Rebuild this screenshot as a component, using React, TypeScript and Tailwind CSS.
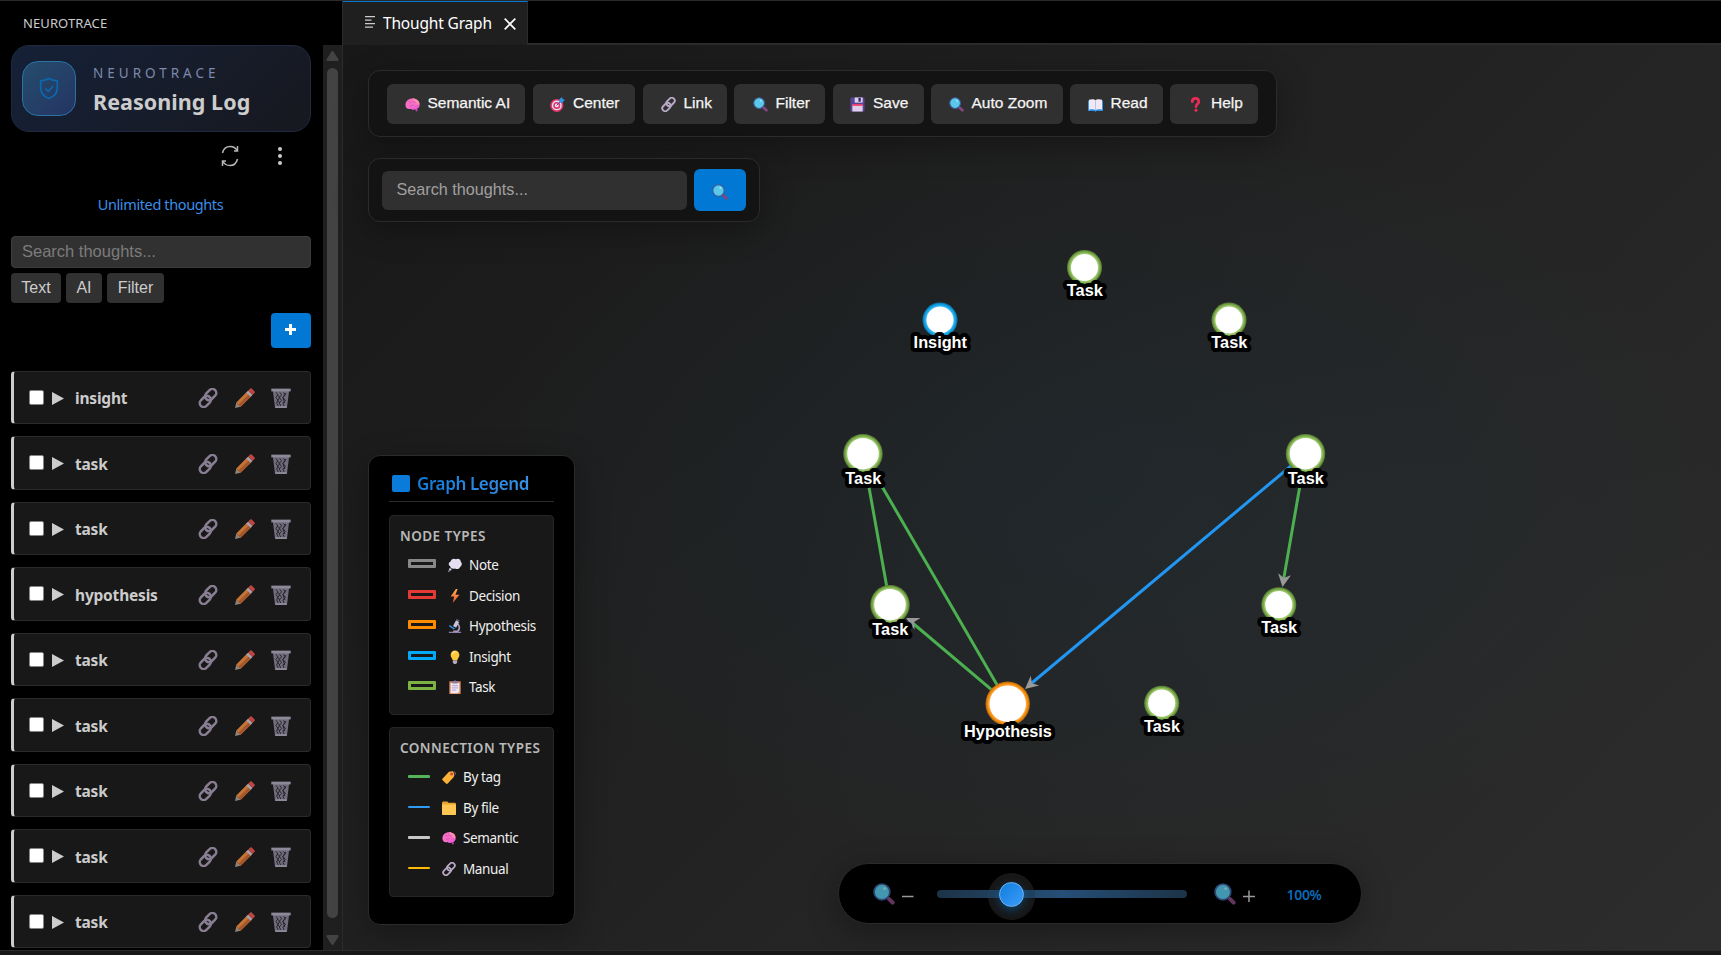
import React from "react";

type IconProps = { className?: string };

const Svg = ({ className = "", children }: IconProps & { children: React.ReactNode }) => (
  <svg viewBox="0 0 32 32" className={`block shrink-0 ${className}`} fill="none">
    {children}
  </svg>
);

const Brain = ({ className }: IconProps) => (
  <Svg className={className}>
    <path d="M20 24l4 7 3-1-1-7z" fill="#c43fb4" />
    <path d="M1 17C1 8 8 3 16 3c9 0 15 5 15 13 0 6-4 9-9 9-3 3-7 2-9 0C6 27 1 24 1 17z" fill="#f770c4" />
    <path d="M12 25c4 2 7 2 10 0 5 0 9-3 9-8-5 4-12 5-19 3z" fill="#f35fd8" />
    <path d="M16 3c9 0 15 5 15 13-4-1-7-3-8-6-3 0-6-3-7-7z" fill="#fb8fb0" />
    <path d="M7 10c3-1 5 1 5 4M14 7c1 4 5 4 8 4M9 19c4 1 6-2 10-2M21 18c2 3 5 2 7 0" stroke="#d14bb5" strokeWidth="1.500" />
  </Svg>
);

const Target = ({ className }: IconProps) => (
  <Svg className={className}>
    <circle cx="14.500" cy="18" r="14" fill="#e0356b" />
    <circle cx="14.500" cy="18" r="10.500" fill="#e9dff0" />
    <circle cx="14.500" cy="18" r="7.500" fill="#e0356b" />
    <circle cx="14.500" cy="18" r="4" fill="#f3e4f2" />
    <path d="M14 18l9-9" stroke="#5b3b8c" strokeWidth="2" />
    <path d="M20 5l6-5 1 5 5 1-6 6-6 0z" fill="#2f97e8" />
  </Svg>
);

const Chain = ({ className }: IconProps) => (
  <Svg className={className}>
    <g stroke="#b9a9c6" strokeWidth="4">
      <rect x="10.300" y="4.300" width="20" height="12.500" rx="6.250" transform="rotate(-45 20.300 10.500)" />
      <rect x="1.700" y="15.200" width="20" height="12.500" rx="6.250" transform="rotate(-45 11.700 21.500)" />
    </g>
  </Svg>
);

const Magnifier = ({ className }: IconProps) => (
  <Svg className={className}>
    <path d="M20 20l3 3" stroke="#5a4a88" strokeWidth="4" />
    <path d="M23.500 23.500l5 5" stroke="#84467f" strokeWidth="6" strokeLinecap="round" />
    <circle cx="13" cy="13" r="11.500" fill="#5ac8ea" stroke="#3d5a96" strokeWidth="2.400" />
    <circle cx="17" cy="8" r="2" fill="#a5e8fa" />
  </Svg>
);

const Floppy = ({ className }: IconProps) => (
  <Svg className={className}>
    <path d="M1 3a2 2 0 012-2h26l2 2v26a2 2 0 01-2 2H3a2 2 0 01-2-2z" fill="#5a4498" />
    <path d="M10 1h17v11H10z" fill="#dcd0ea" />
    <path d="M18 2h5v8h-5z" fill="#33265e" />
    <path d="M5 17h22v14H5z" fill="#dfcdea" />
    <path d="M5 15h22v4H5z" fill="#f0446f" />
  </Svg>
);

const Book = ({ className }: IconProps) => (
  <Svg className={className}>
    <path d="M0 8h32v22H18l-2 2-2-2H0z" fill="#2c8fe0" />
    <path d="M2 6c5-2 11-2 14 1 3-3 9-3 14-1v21c-5-1-11-1-14 1-3-2-9-2-14-1z" fill="#efe8f6" />
    <path d="M16 7v21" stroke="#b6a9c9" strokeWidth="1.500" />
  </Svg>
);

const Question = ({ className }: IconProps) => (
  <Svg className={className}>
    <path d="M9 10c0-5 3-7 7-7s7 3 7 7c0 5-6 5-6 11" stroke="#ee2b55" strokeWidth="5.500" strokeLinecap="round" />
    <circle cx="17" cy="28.500" r="3.200" fill="#ee2b55" />
  </Svg>
);

const Pencil = ({ className }: IconProps) => (
  <Svg className={className}>
    <path d="M0 32l2-9 7 7z" fill="#8f8378" />
    <path d="M2 23L19 6l7 7L9 30z" fill="#c47536" />
    <path d="M5.500 26.500L22.500 9.500l3.500 3.500L9 30z" fill="#a4562c" />
    <path d="M18 7l3-3 7 7-3 3z" fill="#a8a3b3" />
    <path d="M21 4l3-3c1-1 2-1 3 0l4 4c1 1 1 2 0 3l-3 3z" fill="#bf4541" />
  </Svg>
);

const Trash = ({ className }: IconProps) => (
  <Svg className={className}>
    <path d="M3 4h26l-3.500 28h-19z" fill="#716d7d" />
    <path d="M8 7l3 4-3 4 3 5-2 4 3 5M14 7l3 4-4 4 4 5-4 4 3 5M20 7l3 4-4 4 4 5-4 4 2 5M24 8l-5 7 3 9M10 11l4 4-3 5 3 4" stroke="#1d1c20" strokeWidth="1.400" />
    <path d="M.500 1h31v4.500H.500z" fill="#8d8998" />
    <path d="M7 29h18v3H7z" fill="#8d8998" />
  </Svg>
);

const Thought = ({ className }: IconProps) => (
  <Svg className={className}>
    <path d="M6 8c1-6 8-8 12-5 5-3 11 0 11 5 4 4 3 10-1 12-2 6-8 6-12 4-5 2-11 0-11-5-5-3-4-9 1-11z" fill="#e6dff2" />
    <circle cx="5" cy="26" r="2.800" fill="#d7cde8" />
    <circle cx="2" cy="30" r="1.500" fill="#d7cde8" />
  </Svg>
);

const Bolt = ({ className }: IconProps) => (
  <Svg className={className}>
    <path d="M18 0L6 17h8l-3 15 15-19h-9l5-13z" fill="url(#boltFill)" />
    <defs>
      <linearGradient id="boltFill" x1="0" y1="0" x2="0" y2="1">
        <stop stopColor="#ffb04a" />
        <stop offset="1" stopColor="#f0503c" />
      </linearGradient>
    </defs>
  </Svg>
);

const Microscope = ({ className }: IconProps) => (
  <Svg className={className}>
    <path d="M2 29h28v3H2z" fill="#8d7ea6" />
    <path d="M21 11c6 3 7 12 1 17H12" stroke="#a898bd" strokeWidth="4" />
    <path d="M15 18l7-13" stroke="#cdc2dc" strokeWidth="8" />
    <path d="M19 1l7 4" stroke="#5f5479" strokeWidth="3.500" />
    <path d="M3 15l12 8" stroke="#2d8fe0" strokeWidth="3.500" />
  </Svg>
);

const Bulb = ({ className }: IconProps) => (
  <Svg className={className}>
    <path d="M6 11a10 10 0 0120 0c0 6-4 8-5 13H11C10 19 6 17 6 11z" fill="#fcc73b" />
    <path d="M10 9c1-3 3-5 6-5" stroke="#ffe99a" strokeWidth="3" strokeLinecap="round" />
    <path d="M11 24h10v5l-3 3h-4l-3-3z" fill="#b5a8c4" />
  </Svg>
);

const Clipboard = ({ className }: IconProps) => (
  <Svg className={className}>
    <path d="M3 3h26v29H3z" fill="#d98657" />
    <path d="M6 7h20v20l-4 3H6z" fill="#efe6f4" />
    <path d="M10 2h4l2-2 2 2h4v6H10z" fill="#8b7ba3" />
    <path d="M9 13h14M9 18h14M9 23h9" stroke="#a99abf" strokeWidth="2" />
  </Svg>
);

const Tag = ({ className }: IconProps) => (
  <Svg className={className}>
    <path d="M1 20L16 4l9-1 3 4-1 9-14 15c-1 1-3 1-4 0l-8-8c-1-1-1-2 0-3z" fill="#fbb236" />
    <path d="M24 10c1-6 6-7 7-3 0 4-2 5-4 6" stroke="#8a6f80" strokeWidth="1.800" />
    <circle cx="22" cy="9" r="3.500" fill="#c94f45" />
  </Svg>
);

const Folder = ({ className }: IconProps) => (
  <Svg className={className}>
    <path d="M0 4l2-3h10l3 3h15l2 2v24l-2 2H2l-2-2z" fill="#e6a432" />
    <path d="M0 8h32v22l-2 2H2l-2-2z" fill="#fec653" />
  </Svg>
);

const tools: { label: string; Icon: React.FC<IconProps>; cls: string }[] = [
  { label: "Semantic AI", Icon: Brain, cls: "w-[138px] pl-[17.5px]" },
  { label: "Center", Icon: Target, cls: "ml-2 w-[102px] pl-[17px]" },
  { label: "Link", Icon: Chain, cls: "ml-2 w-[84px] pl-[17.5px]" },
  { label: "Filter", Icon: Magnifier, cls: "ml-[7px] w-[91px] pl-[18.5px]" },
  { label: "Save", Icon: Floppy, cls: "ml-2 w-[91px] pl-[17px]" },
  { label: "Auto Zoom", Icon: Magnifier, cls: "ml-[7px] w-[132px] pl-[17.5px]" },
  { label: "Read", Icon: Book, cls: "ml-[7px] w-[93px] pl-[17.5px]" },
  { label: "Help", Icon: Question, cls: "ml-[7px] w-[88px] pl-[18px]" },
];

const thoughts = ["insight", "task", "task", "hypothesis", "task", "task", "task", "task", "task"];

const nodeTypes = [
  { label: "Note", Icon: Thought, cls: "border-[#888888]" },
  { label: "Decision", Icon: Bolt, cls: "border-[#e53935]" },
  { label: "Hypothesis", Icon: Microscope, cls: "border-[#fb8c00]" },
  { label: "Insight", Icon: Bulb, cls: "border-[#03a9f4]" },
  { label: "Task", Icon: Clipboard, cls: "border-[#7cb342]" },
];

const connectionTypes = [
  { label: "By tag", Icon: Tag, cls: "h-[3px] bg-[#55b45a]" },
  { label: "By file", Icon: Folder, cls: "h-[2px] bg-[#2f9bf5]" },
  { label: "Semantic", Icon: Brain, cls: "h-[3px] bg-[#c8c8c8]" },
  { label: "Manual", Icon: Chain, cls: "h-[2px] bg-[#fdbb05]" },
];

const G = { ring: "#74a544", inner: "#98c368", outer: "#5b8038" };
const O = { ring: "#ee8606", inner: "#fb9f2e", outer: "#b96b12" };
const B = { ring: "#0a9de2", inner: "#2fb0ec", outer: "#0c76aa" };

const nodes = [
  { x: 1084.5, y: 267.5, r: 17.5, label: "Task", c: G },
  { x: 940, y: 320, r: 17.5, label: "Insight", c: B },
  { x: 1229, y: 320, r: 17.5, label: "Task", c: G },
  { x: 863, y: 453.7, r: 19.7, label: "Task", c: G },
  { x: 1305.5, y: 453.7, r: 19.7, label: "Task", c: G },
  { x: 890, y: 604.7, r: 19.7, label: "Task", c: G },
  { x: 1278.8, y: 604.7, r: 17.5, label: "Task", c: G },
  { x: 1007.7, y: 703.7, r: 22.2, label: "Hypothesis", c: O },
  { x: 1161.7, y: 703.2, r: 17.5, label: "Task", c: G },
];

const arrows = [
  { x: 906, y: 618, a: 207 },
  { x: 1025, y: 689, a: 140 },
  { x: 1282.5, y: 587, a: 99 },
];

const Graph = () => (
  <svg className="absolute inset-0 h-full w-full" viewBox="343 45 1378 905">
    <g strokeWidth="3">
      <path d="M863 453.700L890 604.700M1008 703.700L863 453.700M1008 703.700L912 622.500M1305.500 453.700L1283.500 580" stroke="#4caf50" />
      <path d="M1305.500 453.700L1030 684.500" stroke="#2196f3" />
    </g>
    {arrows.map((p, i) => (
      <path key={i} d="M0 0L-13 -6.500L-9 0L-13 6.500Z" fill="#999999" transform={`translate(${p.x} ${p.y}) rotate(${p.a})`} />
    ))}
    {nodes.map((n, i) => (
      <g key={i}>
        <circle cx={n.x} cy={n.y} r={n.r} fill={n.c.outer} />
        <circle cx={n.x} cy={n.y} r={n.r - 1} fill={n.c.ring} />
        <circle cx={n.x} cy={n.y} r={n.r - 2.4} fill={n.c.inner} />
        <circle cx={n.x} cy={n.y} r={n.r - 3.9} fill="#ffffff" />
        <text
          x={n.x + 0.3}
          y={n.y + n.r + 10.9}
          textAnchor="middle"
          className="fill-white stroke-black font-['Liberation_Sans',sans-serif] text-[16.3px] font-bold"
          strokeWidth="8"
          strokeLinejoin="round"
          paintOrder="stroke"
        >
          {n.label}
        </text>
      </g>
    ))}
  </svg>
);

const Sidebar = () => (
  <aside className="flex w-[343px] shrink-0 flex-col border-r border-[#2b2b2b] bg-black text-[#cccccc]">
    <div className="flex h-[44px] shrink-0 items-center pl-[23px] pt-px text-[13px] tracking-[0.1px]">
      <span>NEUROTRACE</span>
    </div>
    <div className="flex min-h-0 flex-1">
      <div className="w-[323px] overflow-hidden pl-[11px] pr-3">
        <div className="flex h-[87px] items-center rounded-[18px] border border-[#1f2a41] bg-linear-135 from-[#152138] to-[#17181f] pl-[10px]">
          <div className="flex h-[55px] w-[54px] items-center justify-center rounded-[16px] border border-[#2b73a5] bg-linear-135 from-[#254d6c] to-[#243463]">
            <svg width="20" height="23" viewBox="0 0 20 23" fill="none" stroke="#0b68ad" strokeWidth="1.700" strokeLinejoin="round" strokeLinecap="round">
              <path d="M10 1.500c2.500 1.500 5 2.200 8.300 2.300V11c0 5-3 8.500-8.300 10.500C4.700 19.500 1.700 16 1.700 11V3.800C5 3.700 7.500 3 10 1.500z" />
              <path d="M7 12l2.300 2.300L13.800 9.500" />
            </svg>
          </div>
          <div className="ml-[17px] flex flex-col pt-[4px]">
            <span className="text-[13.5px] leading-[20px] tracking-[4px] text-[#7d89ab]">NEUROTRACE</span>
            <span className="mt-[3px] text-[21.5px] font-bold leading-[32px] tracking-[0.05px]">Reasoning Log</span>
          </div>
        </div>
        <div className="mt-3 flex h-6 items-center justify-end pr-[28px]">
          <svg width="18" height="22" viewBox="0 0 18 22" fill="none" stroke="#b5b5b5" strokeWidth="1.500">
            <path d="M1.500 8C2.500 3.800 5.500 1.500 9 1.500c3 0 5.500 1.200 7 4M16.500 1v5h-3.500M16.500 14c-1 4.200-4 6.500-7.500 6.500-3 0-5.500-1.200-7-4M1.500 21v-5H5" />
          </svg>
          <svg className="ml-[38px]" width="6" height="20" viewBox="0 0 6 20" fill="#cccccc">
            <circle cx="3" cy="3" r="2" />
            <circle cx="3" cy="10" r="2" />
            <circle cx="3" cy="17" r="2" />
          </svg>
        </div>
        <div className="mt-[25px] flex h-6 items-center justify-center pr-px text-[14.5px] tracking-[-0.38px] text-[#3b8eea]">Unlimited thoughts</div>
        <div className="mt-[19px] flex h-8 items-center rounded-[4px] border border-[#3c3c3c] bg-[#313131] pl-[10px] pb-px font-['Liberation_Sans',sans-serif] text-[16.5px] text-[#7c7c7c]">
          Search thoughts...
        </div>
        <div className="mt-[5px] flex h-[30px] gap-[5px] font-['Liberation_Sans',sans-serif] text-[16px]">
          <div className="flex w-[50px] items-center justify-center rounded-[4px] bg-[#313131] pb-px">Text</div>
          <div className="flex w-[36px] items-center justify-center rounded-[4px] bg-[#313131] pb-px">AI</div>
          <div className="flex w-[57px] items-center justify-center rounded-[4px] bg-[#313131] pb-px">Filter</div>
        </div>
        <div className="mt-[10px] flex justify-end">
          <div className="flex h-[35px] w-10 items-center justify-center rounded-[4px] bg-[#0078d4] pb-[2px] pr-px">
            <svg width="11" height="11" viewBox="0 0 11 11" stroke="#ffffff" strokeWidth="3">
              <path d="M5.500 0v11M0 5.500h11" />
            </svg>
          </div>
        </div>
        <div className="mt-[22.8px] flex flex-col gap-3">
          {thoughts.map((t, i) => (
            <div key={i} className="flex h-[53.5px] shrink-0 items-center rounded-[4px] border border-l-[3px] border-[#2b2b2b] border-l-[#cccccc] bg-[#181818] pl-[15px] pr-[19px]">
              <span className="mb-px h-[15px] w-[15px] rounded-[2px] border border-[#858585] bg-white" />
              <svg className="ml-2 mt-px" width="12" height="13" viewBox="0 0 12 13" fill="#cccccc">
                <path d="M0 0l12 6.500L0 13z" />
              </svg>
              <span className="ml-[11px] flex-1 pt-[2.5px] text-[15.5px] font-bold tracking-[-0.2px]">{t}</span>
              <Chain className="mt-px size-5 opacity-70" />
              <Pencil className="ml-[17px] mt-px size-5" />
              <Trash className="ml-4 mt-px size-5" />
            </div>
          ))}
        </div>
      </div>
      <div className="flex w-[19px] flex-col items-center bg-[#1f1f1f]">
        <svg className="mt-[6px] shrink-0" width="13" height="11" viewBox="0 0 13 11" fill="#434343">
          <path d="M6.500 0q.800 0 1.400 1L12.500 8.500q.500 1.500-1 1.500H1.500Q0 10 .500 8.500L5.100 1Q5.700 0 6.500 0z" />
        </svg>
        <div className="mt-[6px] h-[850px] w-[11px] shrink-0 rounded-full bg-[#434343]" />
        <svg className="mt-[17px] shrink-0" width="13" height="11" viewBox="0 0 13 11" fill="#434343">
          <path d="M6.500 10q.800 0 1.400-1L12.500 1.500Q13 0 11.500 0H1.500Q0 0 .500 1.500L5.100 9q.600 1 1.400 1z" />
        </svg>
      </div>
    </div>
  </aside>
);

const Legend = () => (
  <div className="flex h-[470px] w-[207px] shrink-0 flex-col rounded-[12px] border border-[#2b2b2b] bg-black px-5 pt-[14px] shadow-[0_8px_32px_rgba(0,0,0,0.3)]">
    <div className="flex h-8 items-center border-b border-[#2b2b2b] pl-[3px] text-[17px] font-semibold">
      <span className="mb-[5px] h-[17px] w-[18px] rounded-[2px] bg-[#0a7bd8]" />
      <span className="mb-[3px] ml-[7px] whitespace-nowrap bg-linear-90 from-[#0f7bd9] to-[#3791e6] bg-clip-text tracking-[-0.38px] text-transparent">Graph Legend</span>
    </div>
    <div className="mt-[13px] h-[200px] rounded-[4px] border border-[#262626] bg-[#181818] pl-[10px] pt-[10px]">
      <div className="h-6 whitespace-nowrap text-[13.5px] font-semibold leading-[21px] tracking-[0.45px] text-[#b8b8b8]">NODE TYPES</div>
      {nodeTypes.map(({ label, Icon, cls }) => (
        <div key={label} className="flex h-[30.5px] items-center pl-2">
          <span className={`mb-[3px] h-[9px] w-7 rounded-[1px] border-[3px] ${cls}`} />
          <Icon className="ml-3 size-[14px]" />
          <span className="ml-[7px] text-[13.5px] tracking-[-0.37px] text-[#f0f0f0]">{label}</span>
        </div>
      ))}
    </div>
    <div className="mt-3 h-[170px] rounded-[4px] border border-[#262626] bg-[#181818] pl-[10px] pt-[10px]">
      <div className="h-6 whitespace-nowrap text-[13.5px] font-semibold leading-[21px] tracking-[0.45px] text-[#b8b8b8]">CONNECTION TYPES</div>
      {connectionTypes.map(({ label, Icon, cls }) => (
        <div key={label} className="flex h-[30.5px] items-center pl-2">
          <span className={`mb-[2px] w-[22px] rounded-[1px] ${cls}`} />
          <Icon className="ml-3 size-[14px]" />
          <span className="ml-[7px] text-[13.5px] tracking-[-0.37px] text-[#f0f0f0]">{label}</span>
        </div>
      ))}
    </div>
  </div>
);

const ZoomBar = () => (
  <div className="mb-px ml-[263px] flex h-[61px] w-[524px] shrink-0 items-center rounded-full border border-[#2b2b2b] bg-black pl-[33.5px] shadow-[0_8px_32px_rgba(0,0,0,0.3)]">
    <Magnifier className="mt-px size-[22px] opacity-75" />
    <svg className="ml-[7px] mt-[5px] shrink-0" width="12" height="12" viewBox="0 0 12 12" stroke="#999999" strokeWidth="1.500">
      <path d="M0 6.500h11.500" />
    </svg>
    <div className="relative ml-[23px] h-2 w-[250px] shrink-0 rounded-full bg-linear-90 from-[#1c3347] via-[#254f77] to-[#1c3347]">
      <div className="absolute left-[51px] top-[-17px] h-[47px] w-[47px] rounded-full bg-[#171717]" />
      <div className="absolute left-[51px] top-0 h-2 w-[47px] bg-[#20415f]" />
      <div className="absolute left-[62px] top-[-8px] h-[25px] w-[25px] rounded-full border border-[#6db6f8] bg-linear-135 from-[#0e7ddd] to-[#389bf9] shadow-[0_3px_9px_rgba(0,120,212,0.45)]" />
    </div>
    <Magnifier className="ml-[27px] mt-px size-[22px] opacity-75" />
    <svg className="ml-[7px] mt-[5px] shrink-0" width="12" height="12" viewBox="0 0 12 12" stroke="#999999" strokeWidth="1.500">
      <path d="M0 6.500h12M6 .500v12" />
    </svg>
    <span className="ml-[32px] pt-px text-[14px] font-semibold tracking-[-0.3px] text-[#0b69b6]">100%</span>
  </div>
);

export default function App() {
  return (
    <div className="flex h-[955px] w-[1721px] flex-col overflow-hidden border-t border-[#2b2b2b] bg-black font-['Noto_Sans',sans-serif]">
      <div className="flex h-[949px] shrink-0">
        <Sidebar />
        <div className="flex flex-1 flex-col">
          <div className="flex h-[44px] shrink-0">
            <div className="flex w-[185px] items-center border-r border-t border-r-[#2b2b2b] border-t-[#0078d4] bg-[#1f1f1f] pl-[22px] text-white">
              <svg className="mb-[3px]" width="11" height="12" viewBox="0 0 11 12" stroke="#cccccc" strokeWidth="1.300">
                <path d="M0 .700h10M0 4.200h6.500M0 7.700h10M0 11.200h8" />
              </svg>
              <span className="ml-[7px] whitespace-nowrap text-[15.5px] tracking-[-0.17px]">Thought Graph</span>
              <svg className="ml-3" width="12" height="12" viewBox="0 0 12 12" stroke="#ffffff" strokeWidth="1.700">
                <path d="M.700.700l10.600 10.600M11.300.700L.700 11.300" />
              </svg>
            </div>
            <div className="flex-1 border-b-2 border-[#2b2b2b] bg-black" />
          </div>
          <main className="relative flex-1 bg-[radial-gradient(ellipse_at_55%_50%,rgba(0,120,180,0.06),transparent_60%),linear-gradient(135deg,#181818,#2d2d2d)]">
            <Graph />
            <div className="relative flex h-full flex-col items-start pl-[25px] pt-[25px]">
              <div className="flex h-[67px] w-[909px] items-center rounded-[12px] border border-[#2b2b2b] bg-[#131313] pl-[18px] shadow-[0_8px_32px_rgba(0,0,0,0.3)]">
                {tools.map(({ label, Icon, cls }) => (
                  <div key={label} className={`flex h-10 shrink-0 items-center rounded-[6px] bg-[#313030] ${cls}`}>
                    <Icon className="mt-[2px] size-[15px]" />
                    <span className="ml-2 whitespace-nowrap pb-px font-['Liberation_Sans',sans-serif] text-[15.5px] text-[#f5f5f5] [-webkit-text-stroke:0.25px_#f5f5f5]">{label}</span>
                  </div>
                ))}
              </div>
              <div className="mt-[21px] flex h-[64px] w-[392px] items-center rounded-[12px] border border-[#2b2b2b] bg-[#131313] pl-[13px] shadow-[0_8px_32px_rgba(0,0,0,0.3)]">
                <div className="flex h-[39px] w-[305px] items-center rounded-[6px] bg-[#313030] pb-px pl-[14.5px] font-['Liberation_Sans',sans-serif] text-[16.2px] text-[#a0a0a0]">Search thoughts...</div>
                <div className="ml-[7px] flex h-[42px] w-[52px] items-center justify-center rounded-[6px] bg-[#0078d4]">
                  <Magnifier className="mt-1 size-4" />
                </div>
              </div>
              <div className="mt-[233px] flex items-end">
                <Legend />
                <ZoomBar />
              </div>
            </div>
          </main>
        </div>
      </div>
      <div className="flex-1 border-t border-[#2b2b2b] bg-[#181818]" />
    </div>
  );
}
